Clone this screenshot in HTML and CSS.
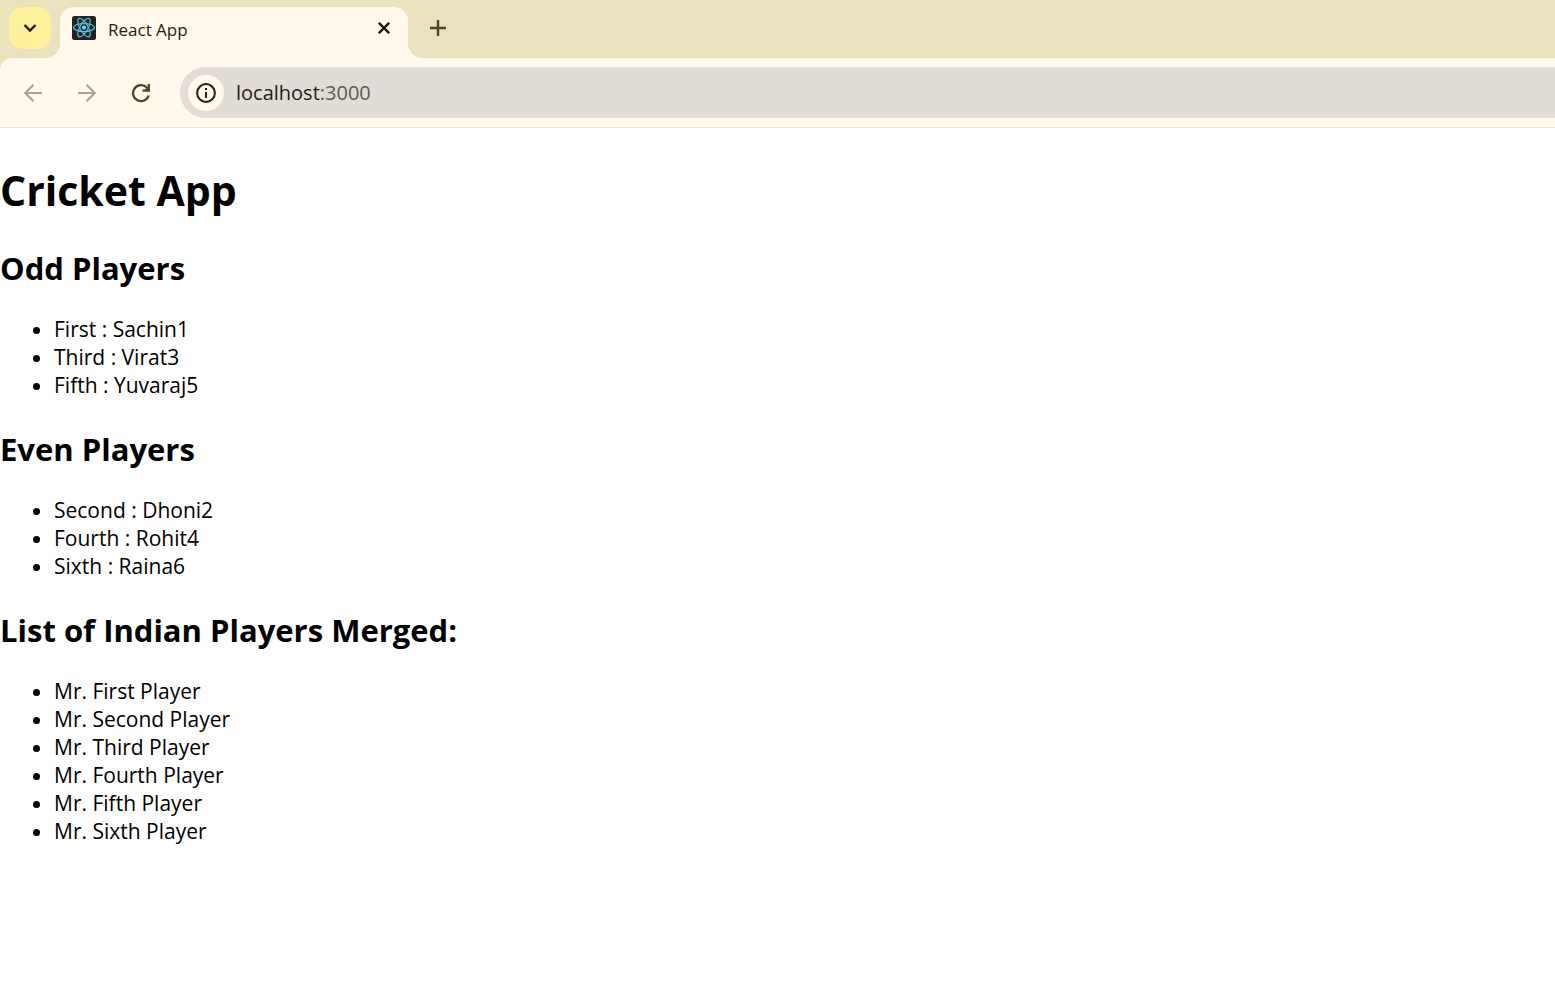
FILE: index.html
```html
<!DOCTYPE html>
<html lang="en">
<head>
<meta charset="utf-8">
<title>React App</title>
<link rel="stylesheet" href="styles.css">
</head>
<body>
<header class="browser">
  <div class="tab-strip">
    <button class="tab-search" aria-label="Search tabs">
      <svg width="14" height="10" viewBox="0 0 14 10" fill="none" stroke="currentColor" stroke-width="2.4"><path d="M1.5 2 7 7.5 12.5 2"/></svg>
    </button>
    <div class="tab">
      <svg class="favicon" width="24" height="24" viewBox="0 0 24 24">
        <rect width="24" height="24" rx="2.5" fill="#222"/>
        <g fill="none" stroke="#53c1de" stroke-width="1.2">
          <ellipse cx="12" cy="11.6" rx="10.4" ry="4"/>
          <ellipse cx="12" cy="11.6" rx="10.4" ry="4" transform="rotate(60 12 11.6)"/>
          <ellipse cx="12" cy="11.6" rx="10.4" ry="4" transform="rotate(120 12 11.6)"/>
        </g>
        <circle cx="12" cy="11.6" r="2.1" fill="#61dafb"/>
      </svg>
      <span class="tab-title">React App</span>
      <button class="tab-close" aria-label="Close tab">
        <svg width="12" height="12" viewBox="0 0 12 12" stroke="currentColor" stroke-width="2.4"><path d="m.8.8 10.400 10.400m0-10.400L.8 11.200"/></svg>
      </button>
    </div>
    <button class="new-tab" aria-label="New tab">
      <svg width="16" height="16" viewBox="0 0 16 16" stroke="currentColor" stroke-width="2.4"><path d="M8 0v16M0 8h16"/></svg>
    </button>
  </div>
  <div class="toolbar">
    <nav class="nav">
      <button class="nav-button" aria-label="Back" disabled>
        <svg width="20" height="20" viewBox="0 0 20 20" fill="none" stroke="currentColor" stroke-width="2.2"><path d="M19 10H3M10.500 1.800 2.300 10l8.200 8.200"/></svg>
      </button>
      <button class="nav-button" aria-label="Forward" disabled>
        <svg width="20" height="20" viewBox="0 0 20 20" fill="none" stroke="currentColor" stroke-width="2.2"><path d="M1 10h16M9.500 1.800 17.700 10l-8.200 8.200"/></svg>
      </button>
      <button class="nav-button" aria-label="Reload">
        <svg width="20" height="20" viewBox="0 0 20 20" fill="none" stroke="currentColor" stroke-width="2.3"><path d="M16 4.800A8 8 0 1 0 17.700 12.500"/><path d="M11.500 7.600h6.300V1"/><path d="m13 7.600 4.800-4.800v4.800z" fill="currentColor" stroke="none"/></svg>
      </button>
    </nav>
    <div class="address">
      <button class="site-info" aria-label="View site information">
        <svg width="20" height="20" viewBox="0 0 20 20"><circle cx="10" cy="10" r="8.900" fill="none" stroke="currentColor" stroke-width="2"/><path d="M9 5h2v2H9zM9 9h2v6H9z" fill="currentColor"/></svg>
      </button>
      <span class="url">localhost<span class="port">:3000</span></span>
    </div>
  </div>
</header>
<main class="page">
  <h1 class="title">Cricket App</h1>
  <h2 class="heading">Odd Players</h2>
  <ul class="players">
    <li>First : Sachin1</li>
    <li>Third : Virat3</li>
    <li>Fifth : Yuvaraj5</li>
  </ul>
  <h2 class="heading">Even Players</h2>
  <ul class="players">
    <li>Second : Dhoni2</li>
    <li>Fourth : Rohit4</li>
    <li>Sixth : Raina6</li>
  </ul>
  <h2 class="heading">List of Indian Players Merged:</h2>
  <ul class="players">
    <li>Mr. First Player</li>
    <li>Mr. Second Player</li>
    <li>Mr. Third Player</li>
    <li>Mr. Fourth Player</li>
    <li>Mr. Fifth Player</li>
    <li>Mr. Sixth Player</li>
  </ul>
</main>
</body>
</html>
```
FILE: styles.css
```css
* { box-sizing: border-box; }
body {
  margin: 0;
  background: #fff;
  color: #000;
  font-family: "Segoe UI", "Open Sans", "Noto Sans", sans-serif;
}
button {
  display: grid;
  place-items: center;
  padding: 0;
  border: 0;
  background: none;
  color: inherit;
}
svg { display: block; }

.tab-strip {
  display: flex;
  height: 58px;
  padding: 7px 9px 0;
  background: #eae2bd;
}
.tab-search {
  width: 42px;
  height: 42px;
  margin-right: 9px;
  border-radius: 14px;
  background: #fff09b;
  color: #1e1c13;
}
.tab {
  position: relative;
  display: flex;
  align-items: center;
  width: 348px;
  padding: 0 16px 9px 12px;
  border-radius: 14px 14px 0 0;
  background: #fff8eb;
  color: #1e1c13;
}
.tab::before,
.tab::after {
  content: "";
  position: absolute;
  bottom: 0;
  width: 15px;
  height: 15px;
}
.tab::before {
  right: 100%;
  background: radial-gradient(circle at 0 0, transparent 15px, #fff8eb 15px);
}
.tab::after {
  left: 100%;
  background: radial-gradient(circle at 100% 0, transparent 15px, #fff8eb 15px);
}
.tab-title {
  flex: 1;
  padding: 4px 0 0 12px;
  font-size: 17px;
  line-height: 24px;
}
.tab-close {
  width: 16px;
  height: 16px;
}
.new-tab {
  width: 42px;
  height: 42px;
  margin-left: 9px;
  color: #4b4628;
}

.toolbar {
  display: flex;
  align-items: center;
  height: 70px;
  padding-left: 15px;
  border-bottom: 1px solid #e9e1d1;
  background: radial-gradient(circle at 12px 12px, #fff8eb 12px, #eae2bd 12px) 0 0 / 12px 12px no-repeat, #fff8eb;
}
.nav {
  display: flex;
  gap: 18px;
  margin-right: 21px;
}
.nav-button {
  width: 36px;
  height: 36px;
  color: #4b4628;
}
.nav-button:disabled { color: #a8a495; }
.address {
  flex: 1;
  display: flex;
  align-items: center;
  gap: 12px;
  height: 51px;
  padding-left: 8px;
  border-radius: 26px 0 0 26px;
  background: #e1dcd6;
}
.site-info {
  width: 36px;
  height: 36px;
  border-radius: 50%;
  background: #fff8eb;
  color: #1e1c13;
}
.url {
  color: #1e1c13;
  font-size: 20px;
  line-height: 28px;
}
.port { color: #5c5a50; }

.page { padding-top: 33px; }
.title {
  margin: 0;
  font-size: 41px;
  line-height: 58px;
}
.heading {
  margin: 28px 0 26px;
  font-size: 31px;
  line-height: 42px;
}
.players {
  margin: 0;
  padding-left: 54px;
  font-size: 21px;
  line-height: 28px;
}
.players + .heading { margin-top: 29px; }
```
